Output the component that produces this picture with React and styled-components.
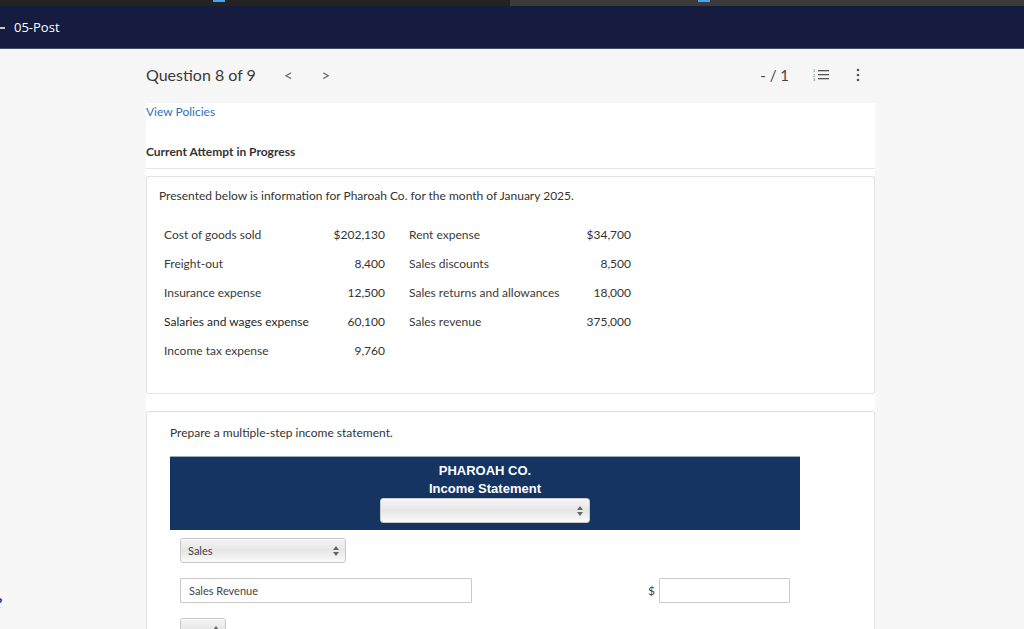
import styled, { createGlobalStyle } from "styled-components";

const Global = createGlobalStyle`
  html, body {
    margin: 0;
    padding: 0;
    background: #f7f7f7;
    font-family: Lato, "Open Sans", sans-serif;
    color: #333;
  }
  * { box-sizing: border-box; }
`;

const Page = styled.div`
  position: relative;
  width: 1024px;
  height: 629px;
  overflow: hidden;
`;

const TopStrip = styled.div`
  display: flex;
  height: 6px;
  background: #232323;
`;
const StripPart = styled.div`
  position: relative;
  width: ${(p) => p.w}px;
  background: ${(p) => p.bg};
`;
const StripMark = styled.span`
  position: absolute;
  top: 0;
  left: ${(p) => p.left}px;
  width: 12px;
  height: 2px;
  background: #4aa3f0;
`;

const NavBar = styled.div`
  display: flex;
  align-items: center;
  height: 43px;
  background: #151c3f;
  border-bottom: 1px solid #464d6c;
  color: #fff;
  font-family: "Open Sans", Lato, sans-serif;
  font-size: 13px;
  gap: 8px;
`;
const BackArrow = styled.svg`
  margin-left: -6px;
  margin-top: 1px;
`;

const QuestionBar = styled.div`
  display: flex;
  align-items: center;
  height: 54px;
  padding: 0 0 3px 146px;
  background: #f6f6f6;
`;
const QuestionTitle = styled.div`
  font-size: 16px;
  color: #3a3a3a;
`;
const NavChevron = styled.span`
  font-size: 15px;
  color: #666;
  margin-left: ${(p) => p.ml}px;
`;
const Score = styled.div`
  margin-left: auto;
  font-size: 15px;
  color: #444;
`;
const IconBox = styled.div`
  display: flex;
  align-items: center;
  margin-left: ${(p) => p.ml}px;
  margin-right: ${(p) => p.mr || 0}px;
  color: #555;
`;

const Content = styled.div`
  margin-left: 146px;
  width: 729px;
  background: #fff;
  padding-top: 1px;
  min-height: 540px;
`;
const PolicyLink = styled.a`
  display: block;
  font-size: 12px;
  color: #2f6fb7;
  line-height: 16px;
  text-decoration: none;
`;
const AttemptHeader = styled.div`
  font-size: 12px;
  font-weight: 700;
  color: #333;
  margin-top: 24px;
  padding-bottom: 9px;
  border-bottom: 1px solid #e6e6e6;
`;

const Card = styled.div`
  border: 1px solid #e2e2e2;
  border-radius: 2px;
  background: #fff;
  margin-top: ${(p) => p.mt}px;
  padding: ${(p) => p.pad};
  min-height: ${(p) => p.h || 0}px;
`;
const Para = styled.p`
  margin: 0;
  font-size: 12px;
  line-height: 16px;
  color: #333;
`;

const DataTable = styled.div`
  display: grid;
  grid-template-columns: 150px 71px 24px 152px 70px;
  row-gap: 13px;
  margin: 23px 0 0 5px;
  font-size: 12px;
  line-height: 16px;
  color: #333;
`;
const Label = styled.div`
  grid-column: ${(p) => p.col};
  color: ${(p) => (p.dark ? "#1f1f1f" : "#3a3a3a")};
`;
const Amount = styled.div`
  text-align: right;
  grid-column: ${(p) => p.col};
`;

const StatementHead = styled.div`
  display: flex;
  flex-direction: column;
  align-items: center;
  width: 630px;
  height: 74px;
  margin-top: 15px;
  padding: 5px 0 0 0;
  background: #163462;
  border-top: 1px solid #9aa9c0;
  font-family: "Liberation Sans", Arial, sans-serif;
  font-weight: 700;
  font-size: 13px;
  line-height: 18px;
  color: #fff;
`;

const Select = styled.div`
  display: flex;
  align-items: center;
  justify-content: space-between;
  width: ${(p) => p.w}px;
  height: 25px;
  padding: 0 6px 0 7px;
  margin: ${(p) => p.m || 0};
  border: 1px solid #c8c8c8;
  border-radius: 3px;
  background: linear-gradient(#f4f4f4, #e6e6e6 50%, #fbfbfb);
  box-shadow: inset 0 1px 0 #fff;
  font-family: Lato, sans-serif;
  font-weight: 400;
  font-size: 11px;
  line-height: 14px;
  color: #444;
`;
const Arrows = styled.svg`
  flex-shrink: 0;
`;

const Row = styled.div`
  display: flex;
  align-items: center;
  margin: ${(p) => p.m};
`;
const TextInput = styled.div`
  display: flex;
  align-items: center;
  width: ${(p) => p.w}px;
  height: 25px;
  padding-left: 8px;
  border: 1px solid #c9c9c9;
  border-radius: 1px;
  font-size: 11px;
  color: #444;
  background: #fff;
`;
const Dollar = styled.span`
  font-size: 12px;
  color: #444;
  margin-left: 176px;
  margin-right: 4px;
`;
const EdgeGlyph = styled.span`
  position: absolute;
  left: -4px;
  top: 594px;
  color: #3b2f8f;
  font-weight: 700;
  font-size: 14px;
`;

const UpDown = () => (
  <Arrows width="6" height="10" viewBox="0 0 6 10">
    <path d="M3 0 L6 4 L0 4 Z" fill="#666" />
    <path d="M3 10 L6 6 L0 6 Z" fill="#666" />
  </Arrows>
);

const rows = [
  ["Cost of goods sold", "$202,130", "Rent expense", "$34,700"],
  ["Freight-out", "8,400", "Sales discounts", "8,500"],
  ["Insurance expense", "12,500", "Sales returns and allowances", "18,000"],
  ["Salaries and wages expense", "60,100", "Sales revenue", "375,000"],
  ["Income tax expense", "9,760", "", ""],
];

export default function App() {
  return (
    <Page>
      <Global />
      <TopStrip>
        <StripPart w={510} bg="#232323">
          <StripMark left={213} />
        </StripPart>
        <StripPart w={514} bg="#3b3b3b">
          <StripMark left={188} />
        </StripPart>
      </TopStrip>
      <NavBar>
        <BackArrow width="12" height="12" viewBox="0 0 12 12">
          <path d="M11 6 H1 M5 2 L1 6 L5 10" stroke="#fff" strokeWidth="1.4" fill="none" />
        </BackArrow>
        <span>05-Post</span>
      </NavBar>
      <QuestionBar>
        <QuestionTitle>Question 8 of 9</QuestionTitle>
        <NavChevron ml={28}>&lt;</NavChevron>
        <NavChevron ml={29}>&gt;</NavChevron>
        <Score>- / 1</Score>
        <IconBox ml={24}>
          <svg width="17" height="13" viewBox="0 0 17 13">
            <text x="0" y="4" fontSize="4" fill="#666" fontFamily="Liberation Sans">1</text>
            <text x="0" y="8.5" fontSize="4" fill="#666" fontFamily="Liberation Sans">2</text>
            <text x="0" y="13" fontSize="4" fill="#666" fontFamily="Liberation Sans">3</text>
            <rect x="5" y="2" width="11" height="1.3" fill="#555" />
            <rect x="5" y="6" width="11" height="1.3" fill="#555" />
            <rect x="5" y="10" width="11" height="1.3" fill="#555" />
          </svg>
        </IconBox>
        <IconBox ml={26} mr={164}>
          <svg width="4" height="14" viewBox="0 0 4 14">
            <circle cx="2" cy="2" r="1.3" fill="#555" />
            <circle cx="2" cy="7" r="1.3" fill="#555" />
            <circle cx="2" cy="12" r="1.3" fill="#555" />
          </svg>
        </IconBox>
      </QuestionBar>
      <Content>
        <PolicyLink href="#">View Policies</PolicyLink>
        <AttemptHeader>Current Attempt in Progress</AttemptHeader>
        <Card mt={7} pad="11px 12px" h={218}>
          <Para>Presented below is information for Pharoah Co. for the month of January 2025.</Para>
          <DataTable>
            {rows.map((r, i) => [
              <Label key={i + "a"} col={1} dark={i === 3}>{r[0]}</Label>,
              <Amount key={i + "b"} col={2}>{r[1]}</Amount>,
              <Label key={i + "c"} col={4}>{r[2]}</Label>,
              <Amount key={i + "d"} col={5}>{r[3]}</Amount>,
            ])}
          </DataTable>
        </Card>
        <Card mt={17} pad="13px 0 0 23px" h={230}>
          <Para>Prepare a multiple-step income statement.</Para>
          <StatementHead>
            <div>PHAROAH CO.</div>
            <div>Income Statement</div>
            <Select w={210} m="0">
              <span />
              <UpDown />
            </Select>
          </StatementHead>
          <Select w={166} m="8px 0 0 10px">
            <span>Sales</span>
            <UpDown />
          </Select>
          <Row m="15px 0 0 10px">
            <TextInput w={292}>Sales Revenue</TextInput>
            <Dollar>$</Dollar>
            <TextInput w={131} />
          </Row>
          <Select w={46} m="15px 0 0 10px">
            <span />
            <UpDown />
          </Select>
        </Card>
      </Content>
      <EdgeGlyph>?</EdgeGlyph>
    </Page>
  );
}
